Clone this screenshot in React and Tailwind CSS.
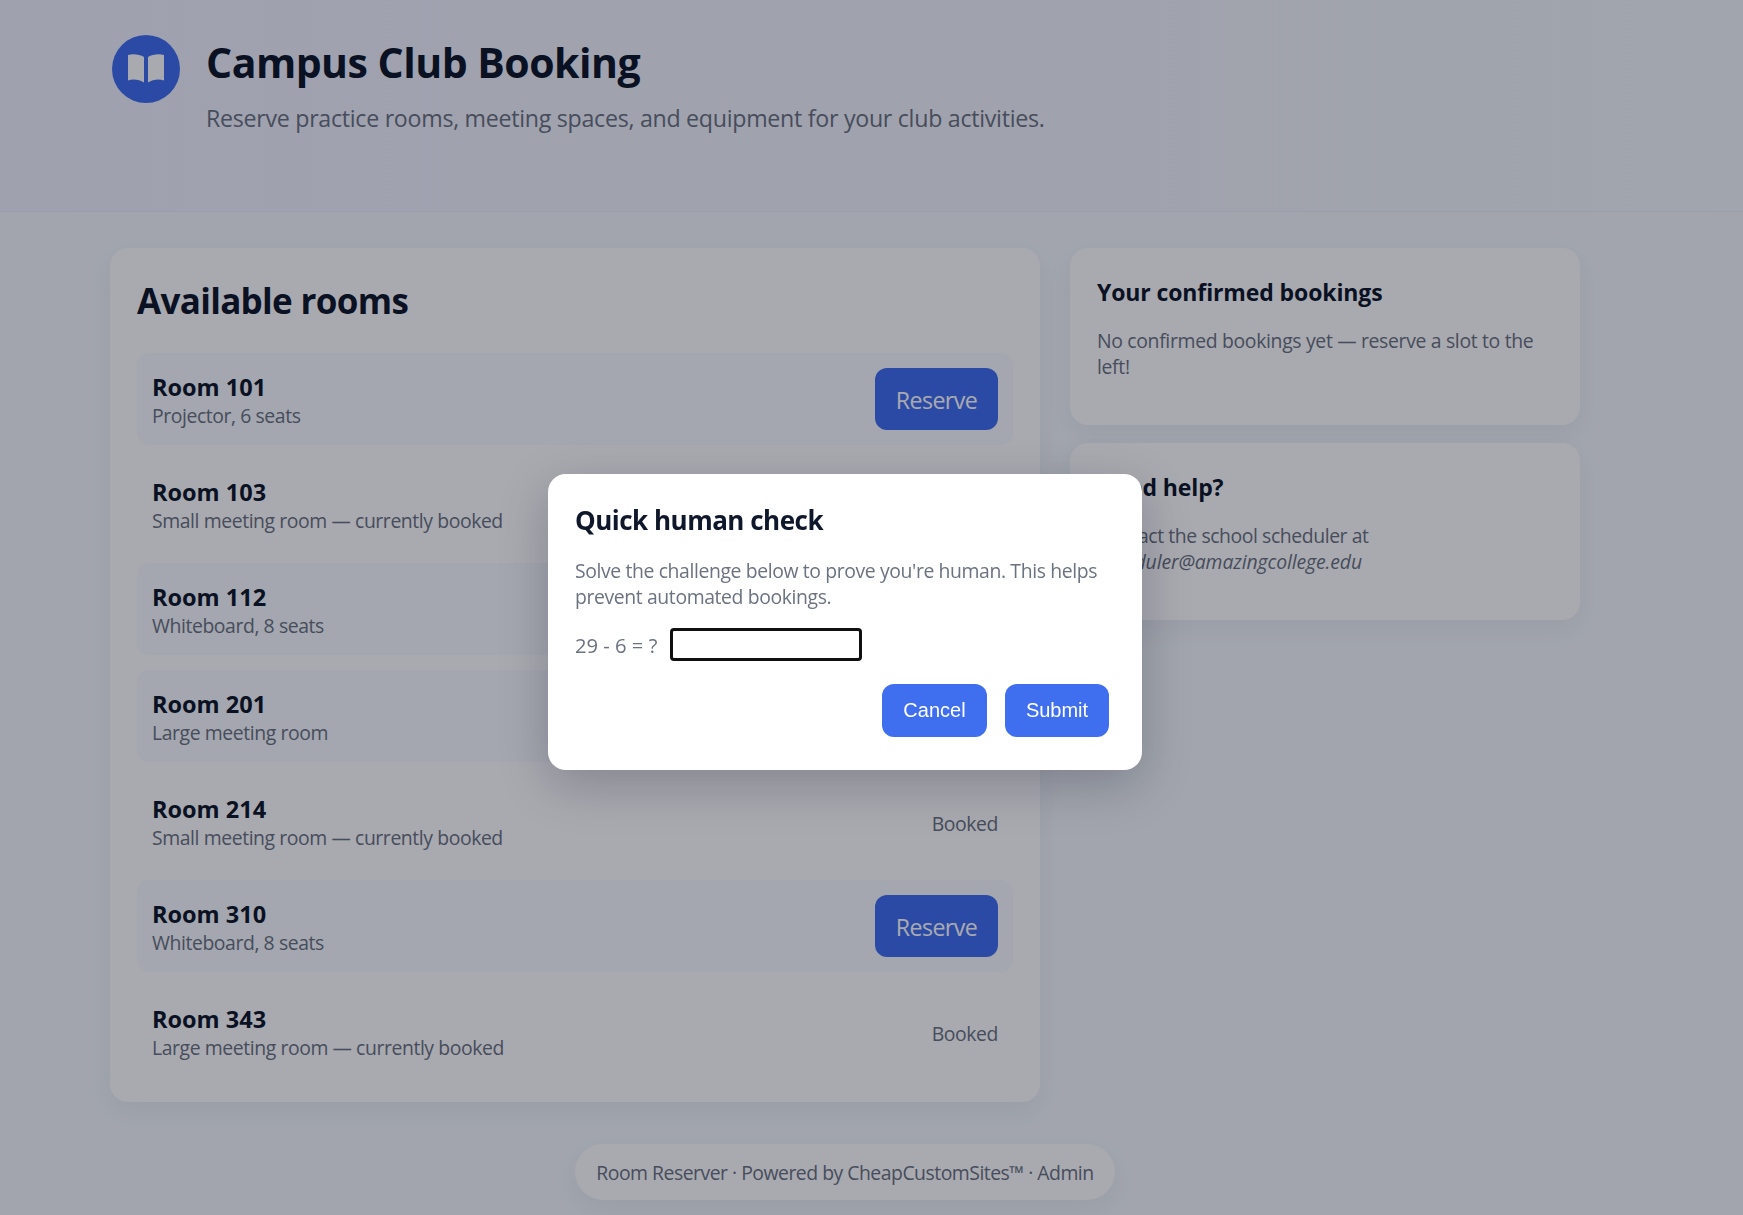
import React from "react";

const rooms = [
  { name: "Room 101", detail: "Projector, 6 seats", open: true },
  { name: "Room 103", detail: "Small meeting room — currently booked", open: false },
  { name: "Room 112", detail: "Whiteboard, 8 seats", open: true },
  { name: "Room 201", detail: "Large meeting room", open: true },
  { name: "Room 214", detail: "Small meeting room — currently booked", open: false },
  { name: "Room 310", detail: "Whiteboard, 8 seats", open: true },
  { name: "Room 343", detail: "Large meeting room — currently booked", open: false },
];

const card = "bg-white rounded-[18px] shadow-[0_9px_27px_rgba(30,50,110,0.06)]";
const muted = "text-[19.4px] tracking-[-0.42px] text-[#6b7280]";

function Logo() {
  return (
    <div className="w-[68px] h-[68px] shrink-0 rounded-full bg-[#3f6eee]">
      <svg viewBox="0 0 68 68" className="w-full h-full" fill="#ffffff">
        <path d="M16 20C21 18.6 27.5 19.2 32 22V47.6C27.5 44.4 21 43.8 16 45.4Z" />
        <path d="M52 20C47 18.6 40.5 19.2 36 22V47.6C40.5 44.4 47 43.8 52 45.4Z" />
      </svg>
    </div>
  );
}

function Room({ room }) {
  return (
    <li
      className={
        room.open
          ? "flex items-center justify-between h-[92px] px-[15px] rounded-[12px] bg-[#f7fafd]"
          : "flex items-center justify-between h-[88px] px-[15px] rounded-[12px]"
      }
    >
      <div>
        <div className="font-bold text-[23.5px] leading-[32px]">{room.name}</div>
        <div className={`leading-[26px] -mb-[1px] ${muted}`}>{room.detail}</div>
      </div>
      {room.open ? (
        <button className="w-[123px] h-[62px] pt-[3px] rounded-[12px] bg-[#3f6eee] text-white text-[23.2px] tracking-[-0.6px]">
          Reserve
        </button>
      ) : (
        <span className={`pt-[6px] ${muted}`}>Booked</span>
      )}
    </li>
  );
}

function Dialog() {
  return (
    <div className="fixed inset-0 flex items-start justify-center pt-[474px] pr-[53px] bg-[rgba(2,6,23,0.34)]">
      <div className="w-[594px] h-[296px] p-[27px] rounded-[18px] bg-white shadow-[0_15px_50px_rgba(2,6,23,0.22)]">
        <h3 className="pt-[1px] font-bold text-[26px] leading-[36px] tracking-[-0.5px]">Quick human check</h3>
        <p className="mt-[20px] leading-[26px] whitespace-nowrap text-[19.4px] tracking-[-0.39px] text-[#6b7280]">
          Solve the challenge below to prove you're human. This helps
          <br />
          prevent automated bookings.
        </p>
        <div className="flex items-center mt-[17px] h-[34px] text-[20.2px] text-[#6b7280]">
          <span className="w-[95px] pt-[2px]">29 - 6 = ?</span>
          <input className="w-[192px] h-[33px] rounded-[4px] border-[3px] border-[#101010] outline-none bg-white" />
        </div>
        <div className="flex justify-end gap-[18px] mt-[23px] pr-[6px] font-['Liberation_Sans',Arial,sans-serif] text-[20px] text-white">
          <button className="w-[105px] h-[53px] pb-[2px] rounded-[12px] bg-[#3f6eee]">Cancel</button>
          <button className="w-[104px] h-[53px] pb-[2px] rounded-[12px] bg-[#3f6eee]">Submit</button>
        </div>
      </div>
    </div>
  );
}

export default function App() {
  return (
    <div className="w-[1743px] h-[1215px] overflow-hidden bg-[#f4f8fb] text-[#0f172a] font-['Open_Sans','Segoe_UI',sans-serif]">
      <header className="flex items-start gap-[26px] h-[212px] pl-[112px] pt-[35px] border-b border-[#e9edf9] bg-linear-to-r from-[#f0f2fd] to-[#f3f7fa]">
        <Logo />
        <div className="pt-[3px]">
          <h1 className="font-bold text-[41px] leading-[48px] tracking-[-0.5px]">Campus Club Booking</h1>
          <p className="mt-[16px] text-[23.2px] leading-[32px] tracking-[-0.28px] text-[#6b7280]">
            Reserve practice rooms, meeting spaces, and equipment for your club activities.
          </p>
        </div>
      </header>

      <main className="flex items-start gap-[30px] pl-[110px] pt-[36px]">
        <section className={`w-[930px] h-[854px] px-[27px] pt-[29px] ${card}`}>
          <h2 className="font-bold text-[35px] leading-[48px] tracking-[-0.68px]">Available rooms</h2>
          <ul className="flex flex-col gap-[15px] mt-[28px]">
            {rooms.map((room) => (
              <Room key={room.name} room={room} />
            ))}
          </ul>
        </section>
        <aside className="flex flex-col gap-[18px] w-[510px]">
          <section className={`h-[177px] px-[27px] pt-[28px] ${card}`}>
            <h3 className="font-bold text-[23px] leading-[32px] tracking-[-0.12px]">Your confirmed bookings</h3>
            <p className="mt-[20px] leading-[26px] whitespace-nowrap text-[19.4px] tracking-[-0.33px] text-[#6b7280]">
              No confirmed bookings yet — reserve a slot to the
              <br />
              left!
            </p>
          </section>
          <section className={`h-[177px] px-[27px] pt-[28px] ${card}`}>
            <h3 className="font-bold text-[23px] leading-[32px] tracking-[-0.12px]">Need help?</h3>
            <p className={`mt-[20px] leading-[26px] whitespace-nowrap ${muted}`}>
              Contact the school scheduler at
              <br />
              <em className="tracking-[-0.12px]">scheduler@amazingcollege.edu</em>
            </p>
          </section>
        </aside>
      </main>

      <footer className="flex justify-center mt-[42px] pr-[53px]">
        <div className="w-[540px] h-[56px] pt-[1px] flex items-center justify-center rounded-full bg-white shadow-[0_9px_27px_rgba(30,50,110,0.06)] text-[19.4px] tracking-[-0.5px] text-[#6b7280] whitespace-nowrap">
          Room Reserver · Powered by CheapCustomSites™ · Admin
        </div>
      </footer>

      <Dialog />
    </div>
  );
}
